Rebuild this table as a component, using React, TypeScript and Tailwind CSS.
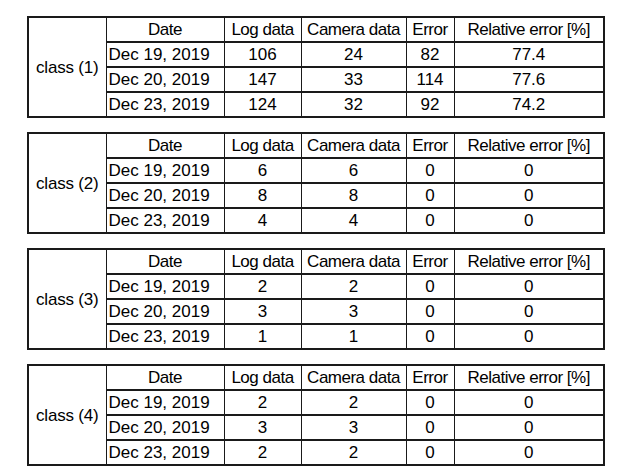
const groups = [
  {
    label: "class (1)",
    rows: [
      ["Dec 19, 2019", "106", "24", "82", "77.4"],
      ["Dec 20, 2019", "147", "33", "114", "77.6"],
      ["Dec 23, 2019", "124", "32", "92", "74.2"],
    ],
  },
  {
    label: "class (2)",
    rows: [
      ["Dec 19, 2019", "6", "6", "0", "0"],
      ["Dec 20, 2019", "8", "8", "0", "0"],
      ["Dec 23, 2019", "4", "4", "0", "0"],
    ],
  },
  {
    label: "class (3)",
    rows: [
      ["Dec 19, 2019", "2", "2", "0", "0"],
      ["Dec 20, 2019", "3", "3", "0", "0"],
      ["Dec 23, 2019", "1", "1", "0", "0"],
    ],
  },
  {
    label: "class (4)",
    rows: [
      ["Dec 19, 2019", "2", "2", "0", "0"],
      ["Dec 20, 2019", "3", "3", "0", "0"],
      ["Dec 23, 2019", "2", "2", "0", "0"],
    ],
  },
];

const headers = ["Date", "Log data", "Camera data", "Error", "Relative error [%]"];

function ClassTable({ label, rows }: { label: string; rows: string[][] }) {
  return (
    <table className="w-[577px] table-fixed border-collapse border-2 border-[#1a1a1a] text-[17px] leading-none text-black">
      <colgroup>
        <col className="w-[78px]" />
        <col className="w-[118px]" />
        <col className="w-[77px]" />
        <col className="w-[105px]" />
        <col className="w-[48px]" />
        <col className="w-[150px]" />
      </colgroup>
      <tbody>
        <tr className="h-[25px]">
          <td rowSpan={4} className="border border-[#1a1a1a] text-center align-middle tracking-[-0.2px]">
            {label}
          </td>
          {headers.map((h) => (
            <td key={h} className="border border-[#1a1a1a] border-b-[#555] text-center tracking-[-0.5px]">
              {h}
            </td>
          ))}
        </tr>
        {rows.map((r, i) => (
          <tr key={i} className="h-[25px]">
            {r.map((c, j) => (
              <td
                key={j}
                className={
                  "border-x border-[#1a1a1a] border-t-2 " +
                  (j === 0 ? "pl-[2px] text-left" : "text-center")
                }
              >
                {c}
              </td>
            ))}
          </tr>
        ))}
      </tbody>
    </table>
  );
}

export default function App() {
  return (
    <div
      className="w-[617px] h-[475px] bg-white pl-[27px] pt-[16px] flex flex-col gap-[14px]"
      style={{ fontFamily: '"Liberation Sans", Arial, sans-serif' }}
    >
      {groups.map((g) => (
        <ClassTable key={g.label} label={g.label} rows={g.rows} />
      ))}
    </div>
  );
}
